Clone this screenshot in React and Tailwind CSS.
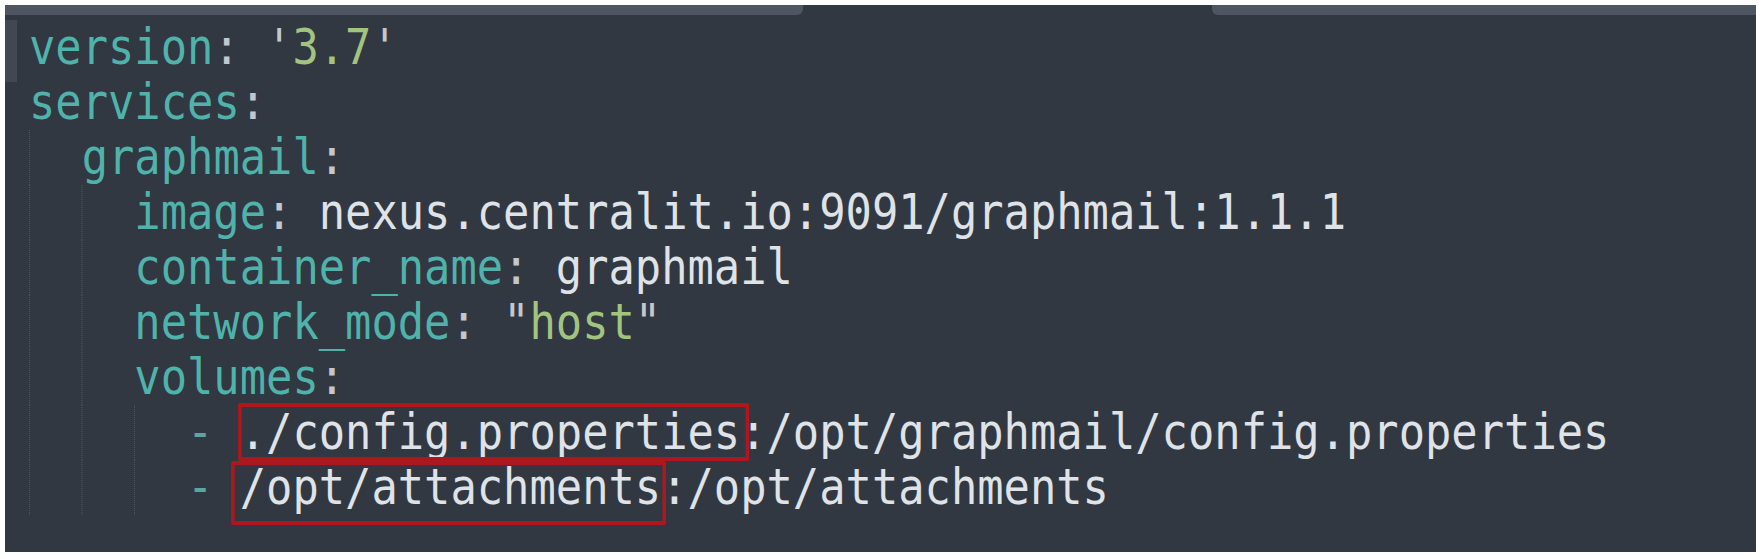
import React from 'react';

const KEY = 'text-[#4fb3ab]';
const VAL = 'text-[#dfe2e6]';
const STR = 'text-[#a3c47f]';
const PUN = 'text-[#c4c7cc]';

const lines = [
  { indent: 0, parts: [[KEY, 'version'], [PUN, ':'], [VAL, ' '], [PUN, "'"], [STR, '3.7'], [PUN, "'"]] },
  { indent: 0, parts: [[KEY, 'services'], [PUN, ':']] },
  { indent: 1, parts: [[KEY, 'graphmail'], [PUN, ':']] },
  { indent: 2, parts: [[KEY, 'image'], [PUN, ':'], [VAL, ' nexus.centralit.io:9091/graphmail:1.1.1']] },
  { indent: 2, parts: [[KEY, 'container_name'], [PUN, ':'], [VAL, ' graphmail']] },
  { indent: 2, parts: [[KEY, 'network_mode'], [PUN, ':'], [VAL, ' '], [PUN, '"'], [STR, 'host'], [PUN, '"']] },
  { indent: 2, parts: [[KEY, 'volumes'], [PUN, ':']] },
  { indent: 3, box: 'config' },
  { indent: 3, box: 'opt' },
];

const Indent = () => (
  <span className="inline-block w-[2ch] h-full border-l border-dotted border-[#535a66] shrink-0" />
);

const Line = ({ line }) => {
  return (
    <div className="flex h-[55px] leading-[55px] whitespace-pre">
      {Array.from({ length: line.indent }).map((_, i) => (
        <Indent key={i} />
      ))}
      {line.parts &&
        line.parts.map(([cls, text], i) => (
          <span key={i} className={cls}>
            {text}
          </span>
        ))}
      {line.box === 'config' && (
        <>
          <span className="text-[#5ea59f]">- </span>
          <span className="relative text-[#dfe2e6]">
            ./config.properties
            <span className="absolute -left-[2px] -right-[10px] -top-[2px] -bottom-[1px] border-[4px] border-[#b0161d] rounded-[2px]" />
          </span>
          <span className={VAL}>:/opt/graphmail/config.properties</span>
        </>
      )}
      {line.box === 'opt' && (
        <>
          <span className="text-[#5ea59f]">- </span>
          <span className="relative text-[#dfe2e6]">
            /opt/attachments
            <span className="absolute -left-[10px] -right-[6px] top-[1px] -bottom-[10px] border-[4px] border-[#b0161d] rounded-[2px]" />
          </span>
          <span className={VAL}>:/opt/attachments</span>
        </>
      )}
    </div>
  );
};

export default function App() {
  return (
    <div className="w-[1763px] h-[559px] bg-white pt-[5px] pl-[5px]">
      <div className="w-[1751px] h-[547px] bg-[#323842] flex flex-col overflow-hidden">
        {/* tab strip */}
        <div className="flex h-[10px] shrink-0">
          <div className="w-[798px] bg-[#4f5561] rounded-br-[6px]" />
          <div className="w-[409px]" />
          <div className="flex-1 bg-[#4f5561] rounded-bl-[6px]" />
        </div>

        <div className="flex flex-1">
          {/* gutter */}
          <div className="w-[12px] shrink-0">
            <div className="mt-[5px] h-[62px] bg-[#414853]" />
          </div>

          {/* code */}
          <div className="pl-[12px] pt-[5px]">
            <div
              className="origin-left scale-x-[0.875] text-[50px]"
              style={{ fontFamily: '"DejaVu Sans Mono", monospace' }}
            >
              {lines.map((line, i) => (
                <Line key={i} line={line} />
              ))}
            </div>
          </div>
        </div>
      </div>
    </div>
  );
}
